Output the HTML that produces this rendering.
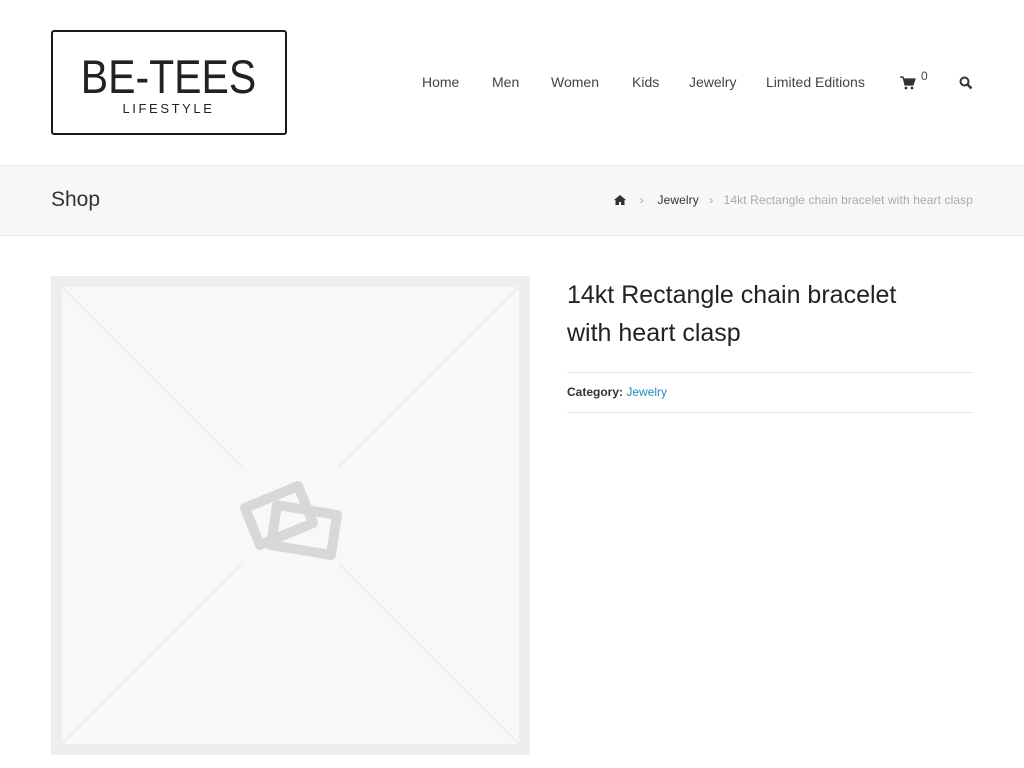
<!DOCTYPE html>
<html><head><meta charset="utf-8"><style>
*{margin:0;padding:0;box-sizing:border-box}
body{width:1024px;height:768px;overflow:hidden;background:#fff;font-family:"Liberation Sans",sans-serif;color:#333;position:relative}
.logo{position:absolute;left:51px;top:30px;width:236px;height:105px;border:2.5px solid #1a1a1a;border-radius:3px}
.logo .b{position:absolute;left:0;width:231px;top:22px;text-align:center;font-size:41px;letter-spacing:0px;color:#222;line-height:46px;transform:scaleY(1.15)}
.logo .l{position:absolute;left:0;width:231px;top:69px;text-align:center;font-size:13px;letter-spacing:2.6px;color:#222}
.nav{position:absolute;top:74px;font-size:14px;color:#444}
.bar{position:absolute;left:0;top:165px;width:1024px;height:71px;background:#f7f7f7;border-top:1px solid #e8e8e8;border-bottom:1px solid #e8e8e8}
.bar h1{position:absolute;left:51px;top:22px;font-size:21px;font-weight:normal;color:#333}
.bc{position:absolute;right:51px;top:27px;font-size:12px;color:#aaa;letter-spacing:0.1px}
.bc .j{color:#333}
.img{position:absolute;left:51px;top:276px;width:479px;height:479px;background:#eee;padding:11px}
.img .in{width:457px;height:457px;background:#f8f8f8;position:relative}
h2{position:absolute;left:567px;top:276px;font-size:25px;font-weight:normal;line-height:38px;color:#222}
.cat{position:absolute;left:567px;top:372px;width:406px;height:41px;border-top:1px solid #e5e5e5;border-bottom:1px solid #e5e5e5;font-size:12px;line-height:39px;color:#333}
.cat a{color:#1e8cbe;text-decoration:none}
</style></head><body>
<div class="logo"><div class="b">BE-TEES</div><div class="l">LIFESTYLE</div></div>
<div class="nav" style="left:422px">Home</div>
<div class="nav" style="left:492px">Men</div>
<div class="nav" style="left:551px">Women</div>
<div class="nav" style="left:632px">Kids</div>
<div class="nav" style="left:689px">Jewelry</div>
<div class="nav" style="left:766px">Limited Editions</div>
<svg style="position:absolute;left:900px;top:76px" width="16" height="14" viewBox="0 0 16 14"><path d="M0 1h3l2 8h8l2-6H4" fill="#333" stroke="#333" stroke-width="1.2"/><circle cx="6" cy="12" r="1.4" fill="#333"/><circle cx="12" cy="12" r="1.4" fill="#333"/></svg>
<div class="nav" style="left:921px;top:69px;font-size:12px">0</div>
<svg style="position:absolute;left:959px;top:76px" width="14" height="14" viewBox="0 0 14 14"><circle cx="5.5" cy="5.5" r="4" fill="none" stroke="#333" stroke-width="2"/><path d="M8.5 8.5l4 4" stroke="#333" stroke-width="2.4"/></svg>
<div class="bar"><h1>Shop</h1>
<div class="bc"><svg width="12" height="10" viewBox="0 0 12 10" style="vertical-align:-1px"><path d="M6 0L0 5h1.5v5h3.5V7h2v3h3.5V5H12z" fill="#333"/></svg>&nbsp;&nbsp;&nbsp;&nbsp;›&nbsp;&nbsp;&nbsp;&nbsp;<span class="j">Jewelry</span>&nbsp;&nbsp;&nbsp;›&nbsp;&nbsp;&nbsp;14kt Rectangle chain bracelet with heart clasp</div></div>
<div class="img"><div class="in"><svg width="457" height="457" viewBox="0 0 457 457" style="position:absolute;left:0;top:0"><path d="M0 0L180 180M457 0L277 180M0 457L180 277M457 457L277 277" stroke="#e6e6e6" stroke-width="1"/>
<g fill="none" stroke="#d8d8d8" stroke-width="10" stroke-linejoin="round"><path d="M215 218l60 10-6 40-60-10z"/><path d="M183 221l53-22 15 37-53 22z"/></g></svg></div></div>
<h2>14kt Rectangle chain bracelet<br>with heart clasp</h2>
<div class="cat"><b>Category:</b> <a>Jewelry</a></div>
</body></html>
